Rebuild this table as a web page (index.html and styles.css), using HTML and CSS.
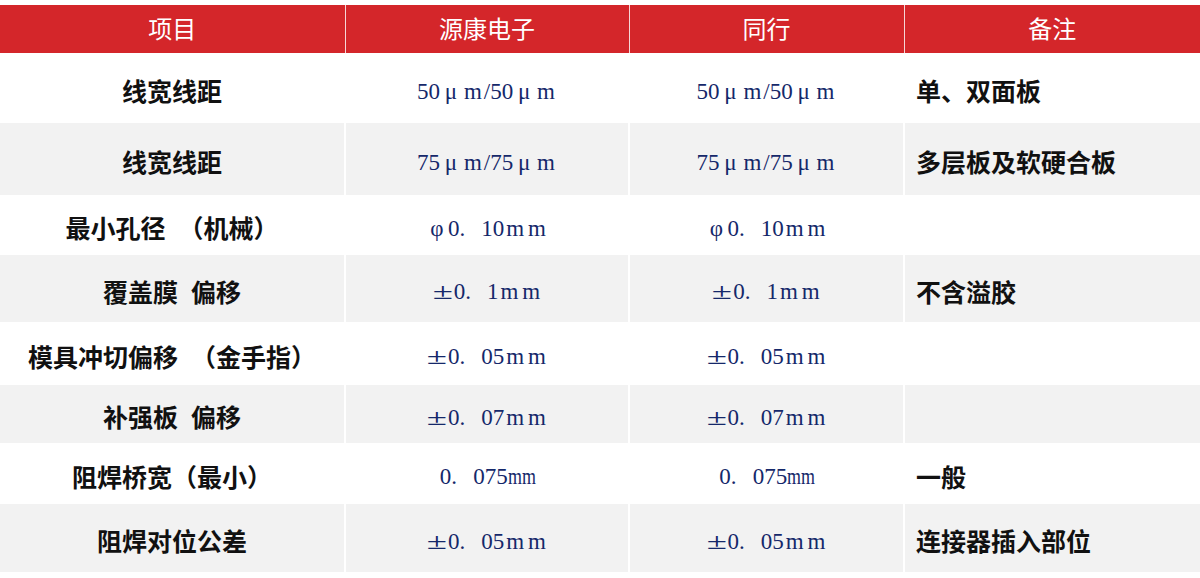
FILE: index.html
```html
<!DOCTYPE html>
<html lang="zh-CN">
<head>
<meta charset="utf-8">
<title>参数对比</title>
<link rel="stylesheet" href="styles.css">
</head>
<body>
<table class="spec">
  <colgroup>
    <col class="c1"><col class="c2"><col class="c3"><col class="c4">
  </colgroup>
  <thead>
    <tr class="head">
      <th>项目</th><th>源康电子</th><th>同行</th><th>备注</th>
    </tr>
  </thead>
  <tbody>
    <tr class="r1">
      <td class="item">线宽线距</td>
      <td class="num">50<span class="w">μ</span><span class="w">m</span>/50<span class="w">μ</span><span class="w">m</span></td>
      <td class="num">50<span class="w">μ</span><span class="w">m</span>/50<span class="w">μ</span><span class="w">m</span></td>
      <td class="note">单、双面板</td>
    </tr>
    <tr class="r2 alt">
      <td class="item">线宽线距</td>
      <td class="num">75<span class="w">μ</span><span class="w">m</span>/75<span class="w">μ</span><span class="w">m</span></td>
      <td class="num">75<span class="w">μ</span><span class="w">m</span>/75<span class="w">μ</span><span class="w">m</span></td>
      <td class="note">多层板及软硬合板</td>
    </tr>
    <tr class="r3">
      <td class="item">最小孔径 （机械）</td>
      <td class="num"><span class="w">φ</span>0<span class="p">.</span>10<span class="w">m</span><span class="w">m</span></td>
      <td class="num"><span class="w">φ</span>0<span class="p">.</span>10<span class="w">m</span><span class="w">m</span></td>
      <td class="note"></td>
    </tr>
    <tr class="r4 alt">
      <td class="item">覆盖膜 偏移</td>
      <td class="num"><span class="w pm">±</span>0<span class="p">.</span>1<span class="w">m</span><span class="w">m</span></td>
      <td class="num"><span class="w pm">±</span>0<span class="p">.</span>1<span class="w">m</span><span class="w">m</span></td>
      <td class="note">不含溢胶</td>
    </tr>
    <tr class="r5">
      <td class="item">模具冲切偏移 （金手指）</td>
      <td class="num"><span class="w pm">±</span>0<span class="p">.</span>05<span class="w">m</span><span class="w">m</span></td>
      <td class="num"><span class="w pm">±</span>0<span class="p">.</span>05<span class="w">m</span><span class="w">m</span></td>
      <td class="note"></td>
    </tr>
    <tr class="r6 alt">
      <td class="item">补强板 偏移</td>
      <td class="num"><span class="w pm">±</span>0<span class="p">.</span>07<span class="w">m</span><span class="w">m</span></td>
      <td class="num"><span class="w pm">±</span>0<span class="p">.</span>07<span class="w">m</span><span class="w">m</span></td>
      <td class="note"></td>
    </tr>
    <tr class="r7">
      <td class="item">阻焊桥宽（最小）</td>
      <td class="num">0<span class="p">.</span>075<span class="mm">mm</span></td>
      <td class="num">0<span class="p">.</span>075<span class="mm">mm</span></td>
      <td class="note">一般</td>
    </tr>
    <tr class="r8 alt">
      <td class="item">阻焊对位公差</td>
      <td class="num"><span class="w pm">±</span>0<span class="p">.</span>05<span class="w">m</span><span class="w">m</span></td>
      <td class="num"><span class="w pm">±</span>0<span class="p">.</span>05<span class="w">m</span><span class="w">m</span></td>
      <td class="note">连接器插入部位</td>
    </tr>
  </tbody>
</table>
</body>
</html>
```

FILE: styles.css
```css
html, body {
  margin: 0;
  padding: 0;
  background: #ffffff;
}

body {
  padding-top: 5px;
  font-family: "Noto Sans CJK SC", "Noto Sans", sans-serif;
}

.spec {
  width: 1200px;
  border-collapse: collapse;
  table-layout: fixed;
}

.c1 { width: 345px; }
.c2 { width: 284px; }
.c3 { width: 275px; }
.c4 { width: 296px; }

.spec th,
.spec td {
  padding: 0;
  border-left: 2px solid #ffffff;
  vertical-align: middle;
}

.spec th:first-child,
.spec td:first-child {
  border-left: none;
}

.head {
  height: 48px;
  background: #d4262a;
}

.spec .head th {
  border-left: 1px solid #f6d6d7;
  color: #ffffff;
  font-size: 24px;
  font-weight: 400;
  text-align: center;
  padding-bottom: 3px;
}

.spec .head th:first-child {
  border-left: none;
}

.r1 { height: 70px; }
.r2 { height: 72px; }
.r3 { height: 60px; }
.r4 { height: 67px; }
.r5 { height: 63px; }
.r6 { height: 58px; }
.r7 { height: 61px; }
.r8 { height: 68px; }

.alt {
  background: #f2f2f2;
}

.spec .item {
  text-align: center;
  font-size: 25px;
  font-weight: 700;
  color: #111111;
  padding-top: 4px;
  word-spacing: 0.3em;
}

.spec .note {
  text-align: left;
  padding-left: 11px;
  padding-top: 4px;
  font-size: 25px;
  font-weight: 700;
  color: #111111;
}

.spec .num {
  text-align: center;
  font-family: "Liberation Serif", "DejaVu Serif", serif;
  font-size: 23px;
  color: #15286a;
  padding-top: 7px;
  white-space: nowrap;
}

.w {
  display: inline-block;
  width: 0.95em;
  text-align: center;
}

.pm {
  transform: scaleX(1.6);
}

.p {
  display: inline-block;
  width: 0.95em;
  text-align: left;
}

.mm {
  display: inline-block;
  transform: scaleX(0.78);
  transform-origin: left center;
  width: 1.15em;
  text-align: left;
}
```
